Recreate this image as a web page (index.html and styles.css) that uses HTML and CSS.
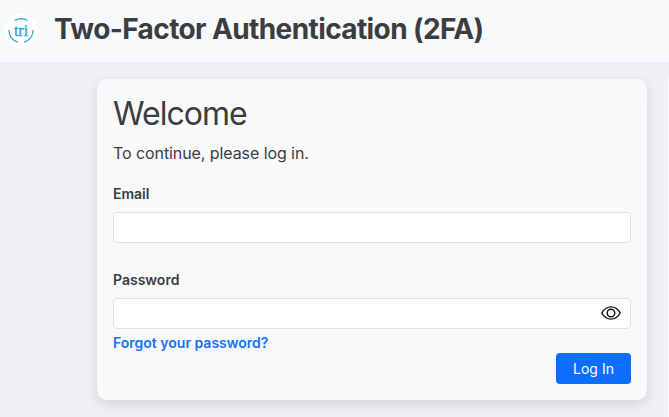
FILE: index.html
```html
<!DOCTYPE html>
<html lang="en">
<head>
    <meta charset="UTF-8">
    <meta name="viewport" content="width=device-width, initial-scale=1.0">
    <title>Two-Factor Authentication (2FA)</title>
    <link rel="stylesheet" href="styles.css">
</head>
<body>
    <header class="header">
        <svg class="logo" viewBox="0 0 34 34" role="img" aria-label="tri">
            <circle cx="17" cy="17" r="17" fill="#fff"/>
            <g fill="none" stroke="#2a9fd8" stroke-width="1.2">
                <path d="M10.5 6.6 A12.2 12.2 0 0 1 23.5 6.6"/>
                <path d="M5 16 A12.2 12.2 0 0 0 13.8 28.2"/>
                <path d="M29 16 A12.2 12.2 0 0 1 20.2 28.2"/>
            </g>
            <text class="logo-text" x="17" y="22" text-anchor="middle">tri</text>
        </svg>
        <h1>Two-Factor Authentication (2FA)</h1>
    </header>

    <div class="content">
        <main class="card">
            <h2>Welcome</h2>
            <p>To continue, please log in.</p>

            <form>
                <div class="input-group">
                    <label for="email">Email</label>
                    <input type="email" id="email">
                </div>

                <div class="input-group">
                    <label for="password">Password</label>
                    <div class="password-field">
                        <input type="password" id="password">
                        <svg class="eye" viewBox="0 0 20 14" fill="none" stroke="#111" stroke-width="1.4">
                            <path d="M0.8 7 C5.2 -1.2 14.8 -1.2 19.2 7 C14.8 15.2 5.2 15.2 0.8 7 Z"/>
                            <circle cx="10" cy="7" r="3.8"/>
                        </svg>
                    </div>
                </div>

                <a class="forgot" href="#">Forgot your password?</a>
                <div class="actions">
                    <button type="button">Log In</button>
                </div>
            </form>
        </main>
        <div class="side"></div>
    </div>
</body>
</html>
```

FILE: styles.css
```css
* {
    box-sizing: border-box;
}

body {
    margin: 0;
    height: 417px;
    overflow: hidden;
    font-family: Inter, sans-serif;
    font-size: 16px;
    line-height: 24px;
    background-color: #eff0f6;
    color: #3b3d40;
}

.header {
    display: flex;
    align-items: center;
    height: 62px;
    padding: 0 0 0 4px;
    background-color: #f8f9fb;
}

.logo {
    width: 34px;
    height: 34px;
    margin-right: 16px;
}

.logo-text {
    font-family: "Liberation Serif", serif;
    font-size: 16px;
    fill: #2a9fd8;
    stroke: #2a9fd8;
    stroke-width: 0.3px;
}

h1 {
    margin: 0 0 4px;
    font-size: 28px;
    font-weight: 700;
    line-height: 34px;
    letter-spacing: -0.6px;
}

.content {
    display: flex;
    justify-content: space-between;
    height: 355px;
    padding: 15px 0 0 97px;
}

.side {
    width: 1px;
    background-color: #fcfcfe;
}

.card {
    width: 550px;
    height: 321px;
    margin-top: 2px;
    padding: 16px;
    border-radius: 10px;
    background-color: #f8f9fb;
    box-shadow: 0 4px 12px rgba(0, 0, 0, 0.12);
}

h2 {
    margin: 0 0 8px;
    font-size: 32px;
    font-weight: 400;
    line-height: 38px;
    letter-spacing: -0.95px;
}

p {
    margin: 0 0 16px;
    letter-spacing: -0.08px;
}

.input-group {
    margin-bottom: 24px;
}

label {
    display: block;
    margin-bottom: 8px;
    padding-top: 3px;
    font-size: 14px;
    font-weight: 600;
    line-height: 20px;
}

input {
    display: block;
    width: 100%;
    height: 31px;
    padding: 4px 8px;
    border: 1px solid #dee0e5;
    border-radius: 4px;
    background-color: #fff;
    font-family: inherit;
    font-size: 14px;
}

.password-field {
    position: relative;
}

.eye {
    position: absolute;
    top: 8px;
    right: 10px;
    width: 20px;
    height: 14px;
}

.forgot {
    display: block;
    margin-top: -20px;
    font-size: 14px;
    font-weight: 600;
    line-height: 20px;
    color: #1570fa;
    text-decoration: none;
}

.actions {
    display: flex;
    justify-content: flex-end;
}

button {
    width: 75px;
    height: 31px;
    padding: 0;
    border: none;
    border-radius: 4px;
    background-color: #0d6efd;
    color: #fff;
    font-family: inherit;
    font-size: 14px;
    cursor: pointer;
}
```
